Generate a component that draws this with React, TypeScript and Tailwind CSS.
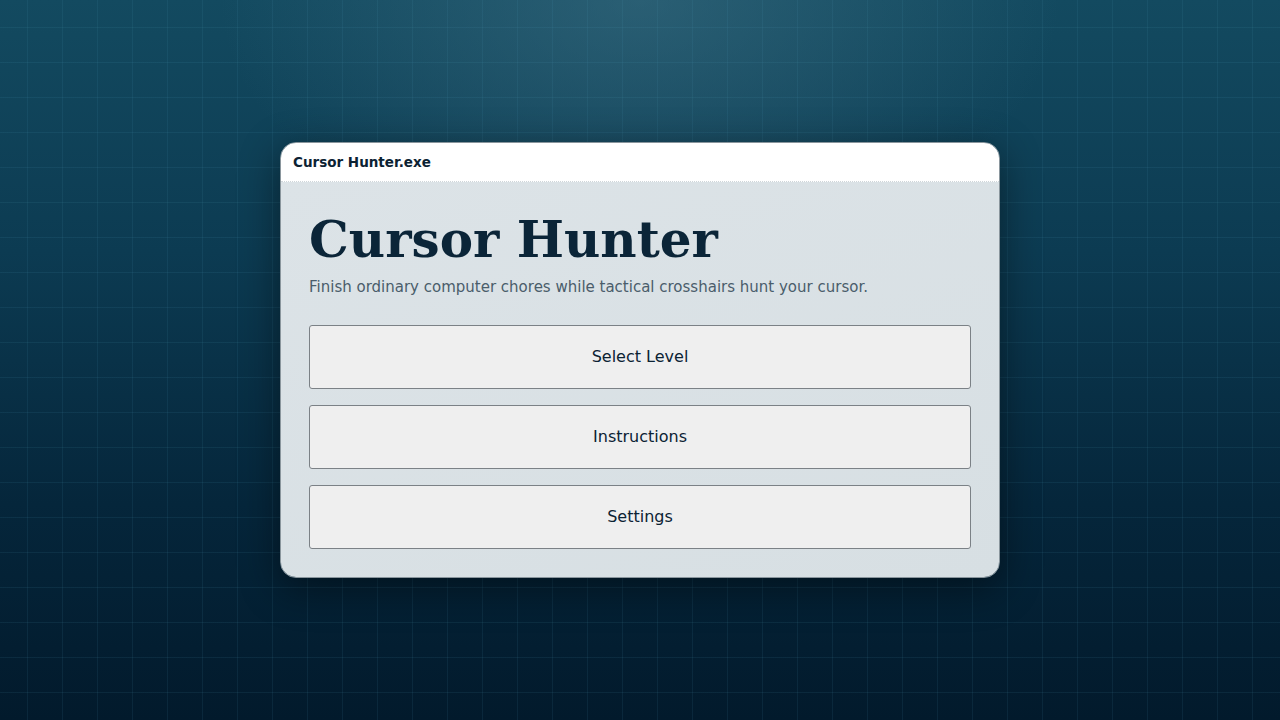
import React from "react";

export default function App() {
  const buttons = ["Select Level", "Instructions", "Settings"];
  return (
    <div className="relative w-[1280px] h-[720px] overflow-hidden flex items-center justify-center bg-[linear-gradient(180deg,#134a60_0%,#0c3b52_35%,#05263b_70%,#021a2c_100%)] font-['DejaVu_Sans',sans-serif]">
      <div className="absolute inset-0 bg-[radial-gradient(ellipse_420px_260px_at_50%_0%,rgba(70,120,140,0.45),rgba(70,120,140,0)_100%)]" />
      <div className="absolute inset-0 bg-[linear-gradient(rgba(80,160,190,0.1)_1px,transparent_1px),linear-gradient(90deg,rgba(80,160,190,0.1)_1px,transparent_1px)] bg-[size:35px_35px] bg-[position:-8px_-8px]" />
      <div className="relative w-[720px] rounded-[16px] border border-[#8a969d] overflow-hidden shadow-[0_10px_40px_rgba(0,0,0,0.45)]">
        <div className="h-[39px] bg-white flex items-center px-3 border-b border-dotted border-[#cfd6da]">
          <span className="text-[13.5px] font-bold text-[#0b2233]">Cursor Hunter.exe</span>
        </div>
        <div className="bg-[linear-gradient(160deg,#dce3e7,#d7dfe3)] px-7 pt-[29px] pb-[28px]">
          <h1 className="font-['DejaVu_Serif',serif] font-bold text-[50px] leading-[58px] text-[#0b2538]">Cursor Hunter</h1>
          <p className="text-[15px] leading-[20px] text-[#4a5d6b] mt-[8px]">Finish ordinary computer chores while tactical crosshairs hunt your cursor.</p>
          <div className="mt-[28px] flex flex-col gap-4">
            {buttons.map((b) => (
              <button key={b} className="h-[64px] w-full bg-[#efefef] border border-[#7b8186] rounded-[3px] text-[16px] text-[#0b2233] flex items-center justify-center">
                {b}
              </button>
            ))}
          </div>
        </div>
      </div>
    </div>
  );
}
